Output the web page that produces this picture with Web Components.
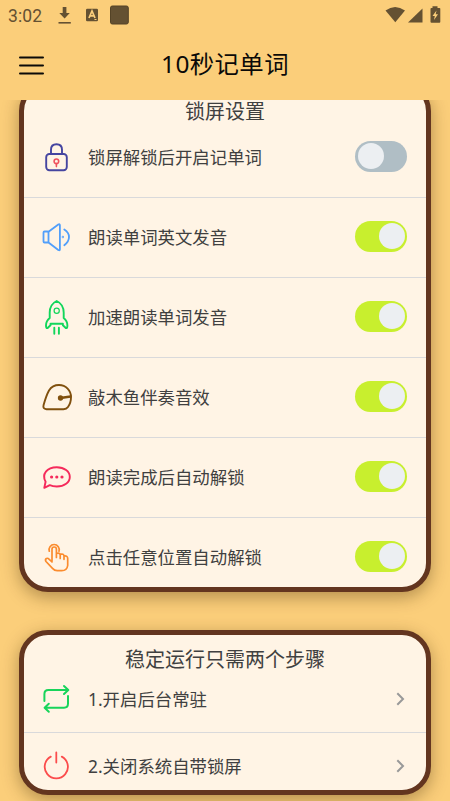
<!DOCTYPE html>
<html lang="zh-CN">
<head>
<meta charset="utf-8">
<title>10秒记单词</title>
<style>
body{margin:0;background:#fbce7a;font-family:"Noto Sans","Noto Sans CJK SC",sans-serif;color:#404040}
</style>
</head>
<body>
<word-app></word-app>
<script>
const define=(name,html)=>customElements.define(name,class extends HTMLElement{
  constructor(){super();const t=document.createElement('template');t.innerHTML=html;
    this.attachShadow({mode:'open'}).append(t.content.cloneNode(true));}
});

define('status-bar',`<style>
:host{display:flex;height:30px;padding:0 7px 0 8px;align-items:center;color:#645132;font:17.500px/30px Roboto,sans-serif}
span{width:50px;white-space:nowrap;letter-spacing:.1px;padding-top:2px}
svg{display:block;flex:none}
.r{margin-left:auto}
</style><span>3:02</span>
<svg width="74" height="30" fill="currentColor"><path d="M4.700 7h3.700v6h3.400l-5.200 5.500L1.300 13h3.400z"/><path d="M.5 22h12.300v1.600H.5z"/><rect x="28" y="8.700" width="12" height="12.500" rx="1.200"/><path d="M31 18l3-7 3 7M32.200 15.800h3.600" fill="none" stroke="#fbce7a" stroke-width="1.700"/><path d="M36.500 19.500h2" stroke="#fbce7a"/><rect x="52.500" y="6" width="17.800" height="18" rx="1.800" stroke="#544326" stroke-width="1"/></svg>
<svg class="r" width="58" height="30" fill="currentColor"><path d="M.5 10.500Q10 3.500 20 10.500L10.300 22.300z"/><path d="M23 22.500L37.500 8.500v14z"/><path d="M47.500 8V6.200h5V8h2q.8 0 .8.800v13q0 1-.8 1h-8q-1 0-1-1v-13q0-.8 1-.8z"/><path d="M51.500 10.500l-4 5.500h2.300l-.8 4 4-5.700h-2.300z" fill="#fbce7a"/></svg>`);

define('app-bar',`<style>
:host{display:grid;grid-template-columns:62px 1fr 62px;height:70px;align-items:center;color:#0b0a08}
svg{display:block;margin-left:19px}
h1{margin:0;text-align:center;font-size:24.400px;line-height:36px;font-weight:400;white-space:nowrap;padding-bottom:2px;letter-spacing:.4px}
</style><svg width="26" height="24" stroke="currentColor" stroke-width="2" stroke-linecap="round"><path d="M1 4.500h23M1 12.500h23M1 20.500h23"/></svg><h1><slot></slot></h1>`);

define('setting-card',`<style>
:host{display:block;box-sizing:border-box;width:412px;height:var(--h);border:5px solid #63351f;border-radius:29px;background:#fff4e5;box-shadow:0 5px 17px rgba(70,45,10,.4)}
div{height:100%;overflow:hidden;border-radius:24px}
h2{margin:0 0 -19px;height:50px;line-height:50px;text-align:center;font-family:"Liberation Sans","Noto Sans CJK SC",sans-serif;font-size:20px;font-weight:400}
</style><div><h2><slot name="title"></slot></h2><slot></slot></div>`);

define('setting-row',`<style>
:host{display:flex;box-sizing:border-box;height:var(--row,80px);padding:0 19px 1px 16px;align-items:center;border-bottom:1px solid #d9d9db}
.t{flex:1;margin-left:16px;font-size:17.400px;line-height:26px;white-space:nowrap}
</style><slot name="icon"></slot><span class="t"><slot></slot></span><slot name="end"></slot>`);

define('toggle-switch',`<style>
:host{display:flex;box-sizing:border-box;width:52px;height:31px;border-radius:16px;padding:2.500px;background:#b0bec5;margin-top:-2px}
:host([on]){background:#c8ef2e;justify-content:flex-end}
i{width:26px;height:26px;border-radius:50%;background:#eceff2}
</style><i></i>`);

define('chevron-icon',`<style>:host{display:block;margin-right:2px}svg{display:block}</style>
<svg width="9" height="14" fill="none" stroke="#999" stroke-width="2"><path d="M1.300 1.300L7 7l-5.700 5.700"/></svg>`);

const icons={
lock:['#4545a0',1.9,'<rect x="6.200" y="13" width="20.600" height="16.300" rx="3.200"/><path d="M11 13V8.800q0-5.500 5.500-5.500t5.500 5.500V13"/><g stroke="#f0525e" stroke-width="1.600"><circle cx="16.400" cy="20.300" r="2.300"/><path d="M16.400 22.600v3"/></g>'],
speaker:['#529ffa',1.8,'<rect x="3.500" y="10.500" width="5" height="11" rx="1"/><path d="M8.500 10.800L18.300 3.500Q19.900 2.700 19.900 4.300V28.200Q19.900 29.900 18.300 29L8.500 21.500M24.300 8.500Q29 11.500 29 16t-4.700 8.300"/><circle cx="22.900" cy="16" r=".3"/>'],
rocket:['#12d65b',1.9,'<path d="M16.700 0C12.500 2 9.800 6.500 9.700 11.500V17Q6 20 6 24.500q0 3 1.600 2.500l2.900-2.700V22.800H22.900v1.500L25.800 27q1.600.5 1.600-2.500 0-4.500-3.700-7.500v-5.500C23.600 6.500 20.900 2 16.700 0z"/><circle cx="16.700" cy="9.700" r="2.600" stroke-width="1.200"/><path d="M14.300 26.700v6M18.900 26.700v6"/>'],
fish:['#80500e',1.9,'<path d="M3.600 24C5 19 6.500 14 9 9.500 11.500 5.500 15 4 19 4 26 4 31 9.500 31 16q0 6-3 10-1.500 2.200-4.500 2.200H6.500Q2.500 28 3.600 24z"/><path d="M20.500 17L30.500 15.500" stroke-width="2.300"/><circle cx="20.500" cy="17" r="1.700" fill="#80500e"/>'],
chat:['#f52a5b',1.9,'<path d="M5.600 20.800C1.300 13 7 6.300 16.800 6.300c7.500 0 13 4.200 13 9.600s-5.500 9.600-13 9.600q-4.200 0-7-1.300L4.300 26.800z"/><g fill="#f52a5b" stroke="none"><circle cx="11.600" cy="16" r="1.600"/><circle cx="16.800" cy="16" r="1.600"/><circle cx="22" cy="16" r="1.600"/></g>'],
hand:['#fb8c2e',1.7,'<path d="M9.300 10.200A5.100 5.100 0 1 1 19 10.200"/><path d="M12 20.300V8.200q0-2.200 2.200-2.200t2.200 2.200v8.300M16.400 12.500q3.600-1 3.800 1.500v3.500M20.200 13.300q3.600-.8 3.800 1.700v3.300M24 15q3.700-.5 3.700 2.500v7q-.7 5.200-6 5.200h-4.500q-2.700 0-4.700-2.300L6 20.500q-1.200-2 .4-3 1.400-.7 2.600.6L12 21"/>'],
repeat:['#18d45b',2,'<path d="M4.400 18v-7q0-4 4-4H28M24 3l4.300 4-4.300 4M28 13v7.500q0 4.200-4 4.200H4.800M8.800 20.800l-4.200 4 4.200 4"/>'],
power:['#fb4c4c',1.8,'<path d="M10.800 6.600A11.600 11.600 0 1 0 21.800 6.600M16.300 2.500v10"/>']
};
customElements.define('line-icon',class extends HTMLElement{
  connectedCallback(){
    if(this.shadowRoot)return;
    const [c,w,p]=icons[this.getAttribute('name')];
    this.attachShadow({mode:'open'}).innerHTML=`<style>:host{display:block;width:32px;height:32px}svg{display:block;overflow:visible}</style>
<svg width="32" height="32" fill="none" stroke="${c}" stroke-width="${w}" stroke-linecap="round" stroke-linejoin="round">${p}</svg>`;
  }
});

const row=(icon,text,end)=>`<setting-row><line-icon slot="icon" name="${icon}"></line-icon>${text}${end.replace('>',' slot="end">')}</setting-row>`;
const on='<toggle-switch on></toggle-switch>',off='<toggle-switch></toggle-switch>',go='<chevron-icon></chevron-icon>';
define('word-app',`<style>
:host{display:flex;flex-direction:column;height:801px;overflow:hidden}
main{flex:1;min-height:0;overflow:hidden;display:flex;flex-direction:column;align-items:center;gap:38px}
.a{--h:510px;margin-top:-18px;flex:none}
.b{--h:165px;--row:67px;flex:none}
</style><status-bar></status-bar><app-bar>10秒记单词</app-bar>
<main><setting-card class="a"><span slot="title">锁屏设置</span>
${row('lock','锁屏解锁后开启记单词',off)}${row('speaker','朗读单词英文发音',on)}${row('rocket','加速朗读单词发音',on)}${row('fish','敲木鱼伴奏音效',on)}${row('chat','朗读完成后自动解锁',on)}${row('hand','点击任意位置自动解锁',on)}
</setting-card><setting-card class="b"><span slot="title">稳定运行只需两个步骤</span>
${row('repeat','1.开启后台常驻',go)}${row('power','2.关闭系统自带锁屏',go)}
</setting-card></main>`);
</script>
</body>
</html>
